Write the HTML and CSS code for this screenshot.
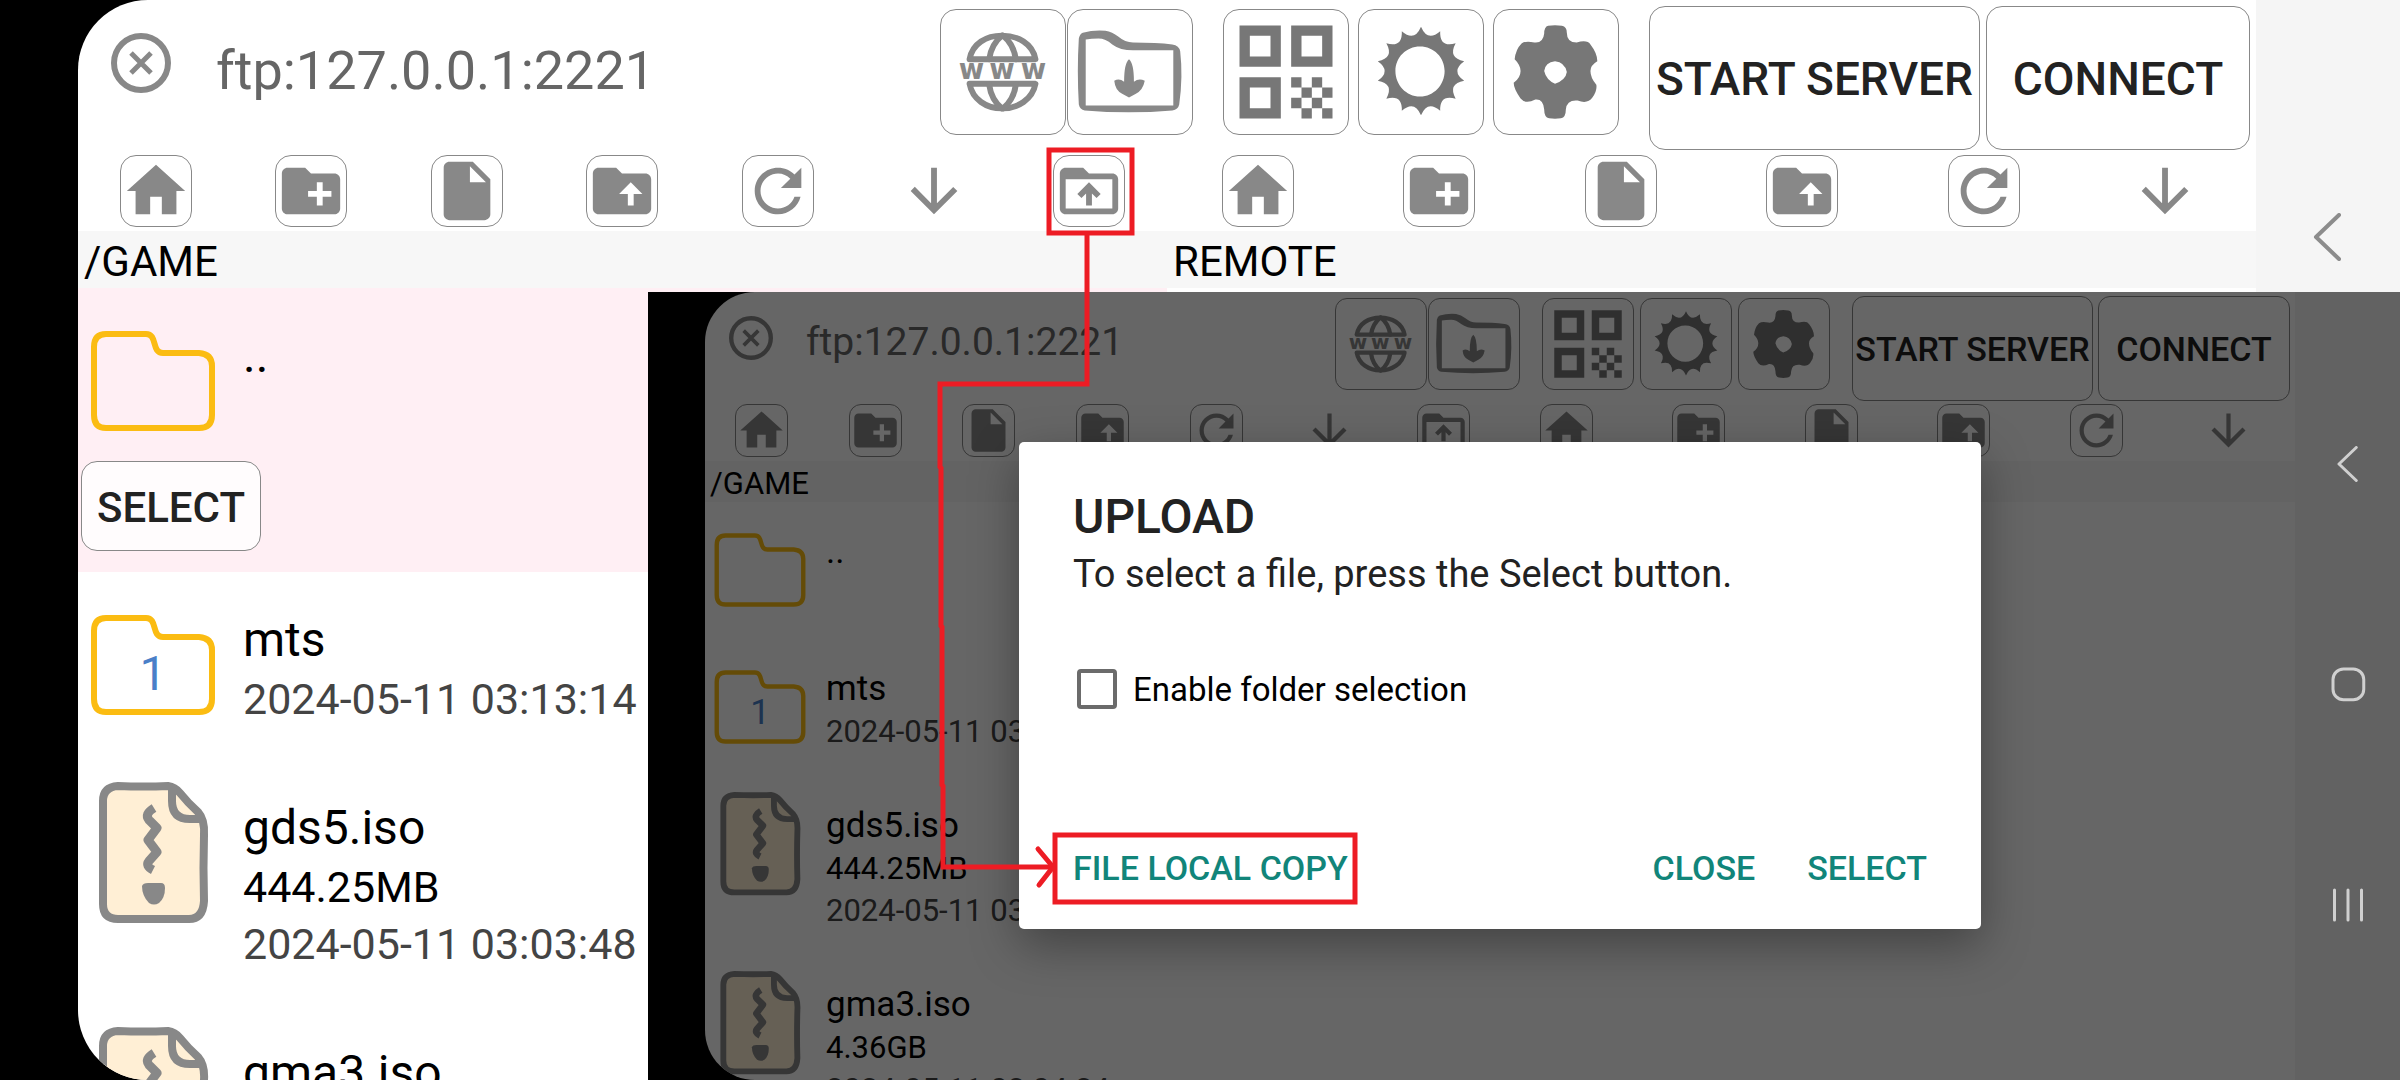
FILE: index.html
```html
<!DOCTYPE html>
<html lang="en">
<head>
    <meta charset="UTF-8">
    <meta name="viewport" content="width=device-width, initial-scale=1.0">
    <title>FTP client - upload</title>
    <link rel="stylesheet" href="styles.css">
</head>
<body>
    <!-- Shared icons -->
    <svg class="defs" aria-hidden="true">
        <symbol id="i-cancel" viewBox="0 0 60 60">
            <circle cx="30" cy="30" r="27" fill="none" stroke="currentColor" stroke-width="6"/>
            <path d="M20 20l20 20M40 20L20 40" fill="none" stroke="currentColor" stroke-width="5"/>
        </symbol>
        <symbol id="i-web" viewBox="0 0 126 126">
            <g fill="none" stroke="currentColor" stroke-width="6" stroke-linecap="round" stroke-linejoin="round">
                <path d="M29 50C32 34 46 26 62 26s31 8 34 24z"/>
                <path d="M62 26q-11 9-13 24M63 26q11 9 13 24"/>
                <path d="M29 75c3 16 17 25 33 25s31-9 34-25z"/>
                <path d="M62 100q-11-9-13-24M63 100q11-9 13-24"/>
            </g>
            <text class="web-text" x="18 49 81" y="70">www</text>
        </symbol>
        <symbol id="i-download" viewBox="0 0 126 126">
            <path fill="currentColor" fill-rule="evenodd" d="M15 23Q26 20 38 21Q45 22 51 27Q58 33 66 33Q90 33 106 35Q113 36 114 42Q117 68 113 96Q112 101 106 102Q62 106 17 102Q12 101 11 96Q9 62 11 29Q12 24 15 23ZM18 30V97H107V41H66Q53 41 45 35Q38 29 31 29Q24 29 18 30Z"/>
            <path fill="currentColor" d="M62 50Q67 54 67 73Q72 69 78 72Q76 82 69 85L62 89L55 85Q48 82 47 72Q52 69 57 73Q57 54 62 50Z"/>
        </symbol>
        <symbol id="i-qr" viewBox="0 0 24 24">
            <path fill="currentColor" fill-rule="evenodd" d="M3 11h8V3H3v8zm2-6h4v4H5V5zM3 21h8v-8H3v8zm2-6h4v4H5v-4zM13 3v8h8V3h-8zm6 6h-4V5h4v4zM13 13h2v2h-2zM17 13h2v2h-2zM15 15h2v2h-2zM19 15h2v2h-2zM13 17h2v2h-2zM17 17h2v2h-2zM15 19h2v2h-2zM19 19h2v2h-2z"/>
        </symbol>
        <symbol id="i-light" viewBox="0 0 126 126">
            <path fill="currentColor" fill-rule="evenodd" d="M63 17Q69.700 32.800 82.500 21.500Q81.700 38.500 98.200 33.900Q90 49 106.900 52Q93 62 106.900 72Q90 75 98.200 90.100Q81.700 85.500 82.500 102.500Q69.700 91.200 63 107Q56.300 91.200 43.500 102.500Q44.300 85.500 27.800 90.100Q36 75 19.100 72Q33 62 19.100 52Q36 49 27.800 33.900Q44.300 38.500 43.500 21.500Q56.300 32.800 63 17ZM62 37C48 37 37 48 37 62S48 88 62 88S87 76 87 62S76 37 62 37Z"/>
        </symbol>
        <symbol id="i-gear" viewBox="0 0 126 126">
            <path fill="currentColor" fill-rule="evenodd" d="M55 16Q62 15 69 16Q74 17 74 23Q74 33 84 33Q95 30 98 35Q105 44 105 52Q98 56 98 62Q98 69 104 76Q105 82 100 89Q95 96 85 92Q74 91 73 101Q73 109 68 110Q62 111 56 110Q51 109 51 101Q50 90 42 91Q32 96 27 90Q20 80 20 74Q27 69 27 62Q27 56 21 50Q22 40 28 34Q32 31 41 33Q50 34 51 24Q51 17 55 16ZM62 52Q52 53 51 62Q53 71 62 75Q73 71 74 63Q72 53 62 52Z"/>
        </symbol>
        <symbol id="i-home" viewBox="0 0 24 24">
            <path fill="currentColor" d="M10 20v-6h4v6h5v-8h3L12 3 2 12h3v8z"/>
        </symbol>
        <symbol id="i-newfolder" viewBox="0 0 24 24">
            <path fill="currentColor" d="M20 6h-8l-2-2H4c-1.110 0-1.990.890-1.990 2L2 18c0 1.110.890 2 2 2h16c1.110 0 2-.890 2-2V8c0-1.110-.890-2-2-2zm-1 8h-3v3h-2v-3h-3v-2h3V9h2v3h3v2z"/>
        </symbol>
        <symbol id="i-file" viewBox="0 0 24 24">
            <path fill="currentColor" d="M6 2c-1.100 0-1.990.900-1.990 2L4 20c0 1.100.890 2 1.990 2H18c1.100 0 2-.900 2-2V8l-6-6H6zm7 7V3.500L18.500 9H13z"/>
        </symbol>
        <symbol id="i-folderup" viewBox="0 0 24 24">
            <path fill="currentColor" fill-rule="evenodd" d="M20 6h-8l-2-2H4c-1.100 0-2 .900-2 2v12c0 1.100.900 2 2 2h16c1.100 0 2-.900 2-2V8c0-1.100-.900-2-2-2zM15 9l4 4h-3v4h-2v-4h-3z"/>
        </symbol>
        <symbol id="i-refresh" viewBox="0 0 24 24">
            <path fill="currentColor" d="M17.650 6.350C16.200 4.900 14.210 4 12 4c-4.420 0-7.990 3.580-7.990 8s3.570 8 7.990 8c3.730 0 6.840-2.550 7.730-6h-2.080c-.820 2.330-3.040 4-5.650 4-3.310 0-6-2.690-6-6s2.690-6 6-6c1.660 0 3.140.690 4.220 1.780L13 11h7V4l-2.350 2.350z"/>
        </symbol>
        <symbol id="i-down" viewBox="0 0 24 24">
            <path fill="currentColor" d="M20 12l-1.410-1.410L13 16.170V4h-2v12.170l-5.580-5.590L4 12l8 8 8-8z"/>
        </symbol>
        <symbol id="i-upload" viewBox="0 0 24 24">
            <path fill="currentColor" fill-rule="evenodd" d="M20 6h-8l-2-2H4c-1.100 0-2 .900-2 2v12c0 1.100.900 2 2 2h16c1.100 0 2-.900 2-2V8c0-1.100-.900-2-2-2zm0 12H4V8h16v10zM8 13l1.410 1.410L11 12.840V17h2v-4.160l1.590 1.590L16 13l-4-4z"/>
        </symbol>
        <symbol id="i-folder" viewBox="0 0 150 150">
            <path fill="none" stroke="#fbbc12" stroke-width="6" d="M28 28H68C80 28 73 47 85 47H121Q134 48 134 60V109Q134 122 121 122H28Q16 122 16 109V41Q16 28 28 28Z"/>
        </symbol>
        <symbol id="i-zip" viewBox="0 0 150 150">
            <path fill="#ffefd5" stroke="#888" stroke-width="8" d="M40 8Q66 9 90 8Q97 9 102 15Q110 25 120 34Q127 42 126 57Q125 90 126 123Q125 141 111 141H40Q25 141 25 126V23Q25 9 40 8Z"/>
            <path fill="none" stroke="#888" stroke-width="8" stroke-linejoin="round" d="M94 8V23Q94 41 112 41H125"/>
            <path fill="none" stroke="#888" stroke-width="9" stroke-linejoin="round" d="M76 30Q66 36 71 42L79 50L70 62L79 74L71 83Q67 88 75 92"/>
            <path fill="#888" d="M64 108Q65 105 70 105H83Q87 105 87 110Q87 120 81 125Q76 128 71 125Q64 118 64 108Z"/>
        </symbol>
        <symbol id="i-back" viewBox="0 0 48 48">
            <path fill="none" stroke="currentColor" stroke-width="4" stroke-linecap="round" stroke-linejoin="round" d="M35 2L12 24l23 22"/>
        </symbol>
        <symbol id="i-circle" viewBox="0 0 48 48">
            <rect x="4" y="4" width="41" height="41" rx="14" fill="none" stroke="currentColor" stroke-width="4"/>
        </symbol>
        <symbol id="i-recent" viewBox="0 0 48 48">
            <path fill="none" stroke="currentColor" stroke-width="4" stroke-linecap="round" d="M6 4v40M24 4v40M42 4v40"/>
        </symbol>
    </svg>

    <!-- File browser -->
    <div class="screen screen-main">
        <main class="app">
            <header class="topbar">
                <button class="cancel" aria-label="Clear"><svg><use href="#i-cancel"/></svg></button>
                <input class="address" type="text" aria-label="Server address" value="ftp:127.0.0.1:2221">
                <div class="group joined">
                    <button class="tool" aria-label="Web"><svg><use href="#i-web"/></svg></button>
                    <button class="tool" aria-label="Download folder"><svg><use href="#i-download"/></svg></button>
                </div>
                <div class="group dark">
                    <button class="tool" aria-label="QR code"><svg><use href="#i-qr"/></svg></button>
                    <button class="tool" aria-label="Brightness"><svg><use href="#i-light"/></svg></button>
                    <button class="tool" aria-label="Settings"><svg><use href="#i-gear"/></svg></button>
                </div>
                <div class="group actions">
                    <button class="text-btn start">START SERVER</button>
                    <button class="text-btn connect">CONNECT</button>
                </div>
            </header>
            <div class="panes">
                <section class="pane">
                    <div class="tools">
                        <button class="mini" aria-label="Home"><svg><use href="#i-home"/></svg></button>
                        <button class="mini" aria-label="New folder"><svg><use href="#i-newfolder"/></svg></button>
                        <button class="mini" aria-label="New file"><svg><use href="#i-file"/></svg></button>
                        <button class="mini" aria-label="Parent folder"><svg><use href="#i-folderup"/></svg></button>
                        <button class="mini" aria-label="Refresh"><svg><use href="#i-refresh"/></svg></button>
                        <button class="mini plain" aria-label="Sort"><svg><use href="#i-down"/></svg></button>
                        <button class="mini" aria-label="Upload"><svg><use href="#i-upload"/></svg></button>
                    </div>
                    <div class="path">/GAME</div>
                    <ul class="files">
                        <li class="file selected">
                            <div class="icon"><svg><use href="#i-folder"/></svg></div>
                            <div class="info"><p class="name">..</p></div>
                            <button class="text-btn select">SELECT</button>
                        </li>
                        <li class="file">
                            <div class="icon"><svg><use href="#i-folder"/></svg><span class="count">1</span></div>
                            <div class="info"><p class="name">mts</p><p class="date">2024-05-11 03:13:14</p></div>
                        </li>
                        <li class="file">
                            <div class="icon"><svg><use href="#i-zip"/></svg></div>
                            <div class="info"><p class="name">gds5.iso</p><p class="size">444.25MB</p><p class="date">2024-05-11 03:03:48</p></div>
                        </li>
                        <li class="file">
                            <div class="icon"><svg><use href="#i-zip"/></svg></div>
                            <div class="info"><p class="name">gma3.iso</p></div>
                        </li>
                    </ul>
                </section>
                <section class="pane">
                    <div class="tools">
                        <button class="mini" aria-label="Home"><svg><use href="#i-home"/></svg></button>
                        <button class="mini" aria-label="New folder"><svg><use href="#i-newfolder"/></svg></button>
                        <button class="mini" aria-label="New file"><svg><use href="#i-file"/></svg></button>
                        <button class="mini" aria-label="Parent folder"><svg><use href="#i-folderup"/></svg></button>
                        <button class="mini" aria-label="Refresh"><svg><use href="#i-refresh"/></svg></button>
                        <button class="mini plain" aria-label="Sort"><svg><use href="#i-down"/></svg></button>
                    </div>
                    <div class="path">REMOTE</div>
                </section>
            </div>
        </main>
        <nav class="navbar">
            <button aria-label="Back"><svg><use href="#i-back"/></svg></button>
            <button aria-label="Home screen"><svg><use href="#i-circle"/></svg></button>
            <button aria-label="Recent apps"><svg><use href="#i-recent"/></svg></button>
        </nav>
    </div>

    <!-- Upload dialog step -->
    <div class="screen screen-upload">
        <main class="app">
            <header class="topbar">
                <button class="cancel" aria-label="Clear"><svg><use href="#i-cancel"/></svg></button>
                <input class="address" type="text" aria-label="Server address" value="ftp:127.0.0.1:2221">
                <div class="group joined">
                    <button class="tool" aria-label="Web"><svg><use href="#i-web"/></svg></button>
                    <button class="tool" aria-label="Download folder"><svg><use href="#i-download"/></svg></button>
                </div>
                <div class="group dark">
                    <button class="tool" aria-label="QR code"><svg><use href="#i-qr"/></svg></button>
                    <button class="tool" aria-label="Brightness"><svg><use href="#i-light"/></svg></button>
                    <button class="tool" aria-label="Settings"><svg><use href="#i-gear"/></svg></button>
                </div>
                <div class="group actions">
                    <button class="text-btn start">START SERVER</button>
                    <button class="text-btn connect">CONNECT</button>
                </div>
            </header>
            <div class="panes">
                <section class="pane">
                    <div class="tools">
                        <button class="mini" aria-label="Home"><svg><use href="#i-home"/></svg></button>
                        <button class="mini" aria-label="New folder"><svg><use href="#i-newfolder"/></svg></button>
                        <button class="mini" aria-label="New file"><svg><use href="#i-file"/></svg></button>
                        <button class="mini" aria-label="Parent folder"><svg><use href="#i-folderup"/></svg></button>
                        <button class="mini" aria-label="Refresh"><svg><use href="#i-refresh"/></svg></button>
                        <button class="mini plain" aria-label="Sort"><svg><use href="#i-down"/></svg></button>
                        <button class="mini" aria-label="Upload"><svg><use href="#i-upload"/></svg></button>
                    </div>
                    <div class="path">/GAME</div>
                    <ul class="files">
                        <li class="file">
                            <div class="icon"><svg><use href="#i-folder"/></svg></div>
                            <div class="info"><p class="name">..</p></div>
                        </li>
                        <li class="file">
                            <div class="icon"><svg><use href="#i-folder"/></svg><span class="count">1</span></div>
                            <div class="info"><p class="name">mts</p><p class="date">2024-05-11 03:13:14</p></div>
                        </li>
                        <li class="file">
                            <div class="icon"><svg><use href="#i-zip"/></svg></div>
                            <div class="info"><p class="name">gds5.iso</p><p class="size">444.25MB</p><p class="date">2024-05-11 03:03:48</p></div>
                        </li>
                        <li class="file">
                            <div class="icon"><svg><use href="#i-zip"/></svg></div>
                            <div class="info"><p class="name">gma3.iso</p><p class="size">4.36GB</p><p class="date">2024-05-11 03:04:24</p></div>
                        </li>
                    </ul>
                </section>
                <section class="pane">
                    <div class="tools">
                        <button class="mini" aria-label="Home"><svg><use href="#i-home"/></svg></button>
                        <button class="mini" aria-label="New folder"><svg><use href="#i-newfolder"/></svg></button>
                        <button class="mini" aria-label="New file"><svg><use href="#i-file"/></svg></button>
                        <button class="mini" aria-label="Parent folder"><svg><use href="#i-folderup"/></svg></button>
                        <button class="mini" aria-label="Refresh"><svg><use href="#i-refresh"/></svg></button>
                        <button class="mini plain" aria-label="Sort"><svg><use href="#i-down"/></svg></button>
                    </div>
                    <div class="path"></div>
                </section>
            </div>
        </main>
        <nav class="navbar">
            <button aria-label="Back"><svg><use href="#i-back"/></svg></button>
            <button aria-label="Home screen"><svg><use href="#i-circle"/></svg></button>
            <button aria-label="Recent apps"><svg><use href="#i-recent"/></svg></button>
        </nav>

        <div class="overlay">
            <div class="dialog" role="dialog" aria-labelledby="dialogTitle">
                <h2 id="dialogTitle">UPLOAD</h2>
                <p class="message">To select a file, press the Select button.</p>
                <div class="option">
                    <input type="checkbox" id="folderSelection">
                    <label for="folderSelection">Enable folder selection</label>
                </div>
                <div class="dialog-buttons">
                    <button>FILE LOCAL COPY</button>
                    <button class="push">CLOSE</button>
                    <button>SELECT</button>
                </div>
            </div>
        </div>
    </div>

    <!-- Red marker from the upload icon to the dialog button -->
    <svg class="marker" viewBox="0 0 2400 1080" preserveAspectRatio="none" aria-hidden="true">
        <rect x="1049" y="150" width="83" height="83"/>
        <path d="M1087 235V384H940V467L941 468V626L942 627V785L943 786V867H1051"/>
        <path d="M1038 849L1053 867L1039 885" stroke-linecap="round"/>
        <rect x="1055" y="835" width="300" height="67"/>
    </svg>
</body>
</html>
```

FILE: styles.css
```css
* {
    box-sizing: border-box;
}
body {
    margin: 0;
    height: 100vh;
    position: relative;
    overflow: hidden;
    background: #000;
    font-family: Roboto, sans-serif;
    color: #000;
}
button {
    padding: 0;
    border: none;
    background: none;
    font-family: inherit;
    color: inherit;
    cursor: pointer;
}
svg {
    display: block;
    width: 100%;
    height: 100%;
}
p, h2, ul {
    margin: 0;
    padding: 0;
}
.defs {
    position: absolute;
    width: 0;
    height: 0;
}
.web-text {
    font: bold 28px "DejaVu Sans", sans-serif;
    fill: currentColor;
}

/* Sizes of the two screens */
.screen-main {
    --edge: 78px;
    --corner: 70px;
    --nav: 144px;
    --nav-icon: 48px;
    --nav-pad: 213px 0;
    --radius: 16px;
    --topbar: 152px;
    --top-pad: 6px;
    --tool: 126px;
    --tool-top: 3px;
    --tool-gap: 9px;
    --group-gap: 30px;
    --btn-gap: 6px;
    --btn-height: 144px;
    --btn-font: 46px;
    --start: 331px;
    --connect: 264px;
    --cancel: 60px;
    --cancel-left: 33px;
    --cancel-top: 27px;
    --address-font: 54px;
    --address-gap: 45px;
    --address-height: 128px;
    --mini: 72px;
    --mini-row: 79px;
    --path: 57px;
    --path-pad: 6px;
    --path-font: 42px;
    --text: 43px;
    --name: 48px;
    --name-line: 62px;
    --line: 57px;
    --info-top: 37px;
    --file-pad: 32px;
    --icon: 150px;
    --icon-top: 18px;
    --icon-bottom: -12px;
    --icon-gap: 15px;
    --count-top: 60px;
}
.screen-upload {
    --edge: 57px;
    --corner: 50px;
    --nav: 105px;
    --nav-icon: 36px;
    --nav-pad: 154px 0 157px;
    --radius: 12px;
    --topbar: 111px;
    --top-pad: 4px;
    --tool: 92px;
    --tool-top: 2px;
    --tool-gap: 6px;
    --group-gap: 22px;
    --btn-gap: 5px;
    --btn-height: 105px;
    --btn-font: 34px;
    --start: 241px;
    --connect: 192px;
    --cancel: 44px;
    --cancel-left: 24px;
    --cancel-top: 20px;
    --address-font: 39px;
    --address-gap: 33px;
    --address-height: 92px;
    --mini: 53px;
    --mini-row: 58px;
    --path: 41px;
    --path-pad: 5px;
    --path-font: 31px;
    --text: 31px;
    --name: 35px;
    --name-line: 45px;
    --line: 42px;
    --info-top: 27px;
    --file-pad: 23px;
    --icon: 110px;
    --icon-top: 13px;
    --icon-bottom: -9px;
    --icon-gap: 11px;
    --count-top: 43px;
}

.screen {
    display: flex;
    padding-left: var(--edge);
    background: #000;
    overflow: hidden;
}
.screen-main {
    height: 100%;
}
.screen-upload {
    position: absolute;
    top: 27%;
    left: 27%;
    right: 0;
    bottom: 0;
}
.app {
    flex: 1;
    min-width: 0;
    display: flex;
    flex-direction: column;
    background: #fff;
    border-radius: var(--corner) 0 0 var(--corner);
    overflow: hidden;
}

/* Top bar */
.topbar {
    display: flex;
    align-items: flex-start;
    flex: none;
    height: var(--topbar);
    padding: var(--top-pad) var(--btn-gap) 0 0;
    color: #888;
}
.cancel {
    flex: none;
    width: var(--cancel);
    height: var(--cancel);
    margin: var(--cancel-top) 0 0 var(--cancel-left);
}
.address {
    flex: 1;
    min-width: 0;
    height: var(--address-height);
    margin: 0 0 0 var(--address-gap);
    padding: 0;
    border: none;
    background: none;
    font: var(--address-font) Roboto, sans-serif;
    color: #666;
}
.group {
    display: flex;
    gap: var(--tool-gap);
    margin-left: var(--group-gap);
}
.joined {
    gap: 1px;
}
.dark {
    color: #777;
}
.actions {
    gap: var(--btn-gap);
}
.tool {
    width: var(--tool);
    height: var(--tool);
    margin-top: var(--tool-top);
    border: 1px solid #888;
    border-radius: var(--radius);
}
.text-btn {
    height: var(--btn-height);
    padding-top: 2px;
    border: 1px solid #888;
    border-radius: var(--radius);
    background: #fff;
    font-size: var(--btn-font);
    font-weight: 500;
    color: #222;
    white-space: nowrap;
}
.start {
    width: var(--start);
}
.connect {
    width: var(--connect);
}

/* Local and remote panes */
.panes {
    flex: 1;
    min-height: 0;
    display: grid;
    grid-template-columns: 1fr 1fr;
}
.pane {
    min-width: 0;
}
.tools {
    display: flex;
    justify-content: space-around;
    align-items: center;
    height: var(--mini-row);
    padding-bottom: 2px;
    color: #888;
}
.mini {
    width: var(--mini);
    height: var(--mini);
    border: 1px solid #888;
    border-radius: var(--radius);
}
.plain {
    border-color: transparent;
}
.path {
    height: var(--path);
    padding: 2px 0 0 var(--path-pad);
    background: #f7f7f7;
    font-size: var(--path-font);
    line-height: var(--path);
}

/* File list */
.files {
    list-style: none;
}
.file {
    display: grid;
    grid-template-columns: var(--icon) 1fr;
    column-gap: var(--icon-gap);
    align-items: start;
    padding-bottom: var(--file-pad);
}
.file .icon {
    position: relative;
    height: var(--icon);
    margin: var(--icon-top) 0 var(--icon-bottom);
}
.count {
    position: absolute;
    top: var(--count-top);
    left: 0;
    right: 0;
    font-size: var(--name);
    line-height: 1;
    text-align: center;
    color: #4a7fc8;
}
.info {
    padding-top: var(--info-top);
}
.name {
    font-size: var(--name);
    line-height: var(--name-line);
}
.size, .date {
    font-size: var(--text);
    line-height: var(--line);
}
.date {
    color: #444;
}
.selected {
    background: #ffeff4;
    padding-bottom: 21px;
}
.selected .icon {
    margin-bottom: 5px;
}
.select {
    grid-column: 1 / -1;
    justify-self: start;
    width: 180px;
    height: 90px;
    margin-left: 3px;
    font-size: var(--path-font);
    background: #fffcfd;
}

/* Android navigation bar */
.navbar {
    flex: none;
    width: var(--nav);
    display: flex;
    flex-direction: column;
    justify-content: space-between;
    align-items: center;
    padding: var(--nav-pad);
    background: #f5f5f5;
    color: #8c8c8c;
}
.navbar button {
    width: var(--nav-icon);
    height: var(--nav-icon);
}
.screen-upload .navbar {
    position: relative;
    z-index: 2;
    background: #626262;
    color: #d0d0d0;
}

/* Dialog */
.overlay {
    position: absolute;
    inset: 0;
    display: flex;
    align-items: center;
    justify-content: center;
    padding: 0 var(--nav) 0 var(--edge);
    background: rgba(0, 0, 0, 0.6);
}
.dialog {
    width: 90%;
    max-width: 962px;
    padding: 47px 54px 25px;
    background: #fff;
    border-radius: 5px;
    box-shadow: 0 16px 48px rgba(0, 0, 0, 0.35);
    color: #222;
}
.dialog h2 {
    font-size: 48px;
    font-weight: 500;
    line-height: 56px;
}
.message {
    margin-top: 5px;
    font-size: 38px;
    line-height: 48px;
}
.option {
    display: flex;
    align-items: center;
    gap: 16px;
    margin-top: 69px;
    margin-left: 4px;
    font-size: 33px;
    line-height: 40px;
    color: #000;
}
.option input {
    appearance: none;
    width: 40px;
    height: 40px;
    margin: 0;
    border: 4px solid #6b6b6b;
    border-radius: 4px;
}
.option label {
    padding-top: 3px;
}
.dialog-buttons {
    display: flex;
    gap: 52px;
    margin-top: 122px;
}
.dialog-buttons button {
    height: 72px;
    font-size: 34px;
    font-weight: 500;
    color: #11857a;
    white-space: nowrap;
}
.dialog-buttons .push {
    margin-left: auto;
}

.marker {
    position: absolute;
    inset: 0;
    fill: none;
    stroke: #ed1c24;
    stroke-width: 5;
    pointer-events: none;
}
```
